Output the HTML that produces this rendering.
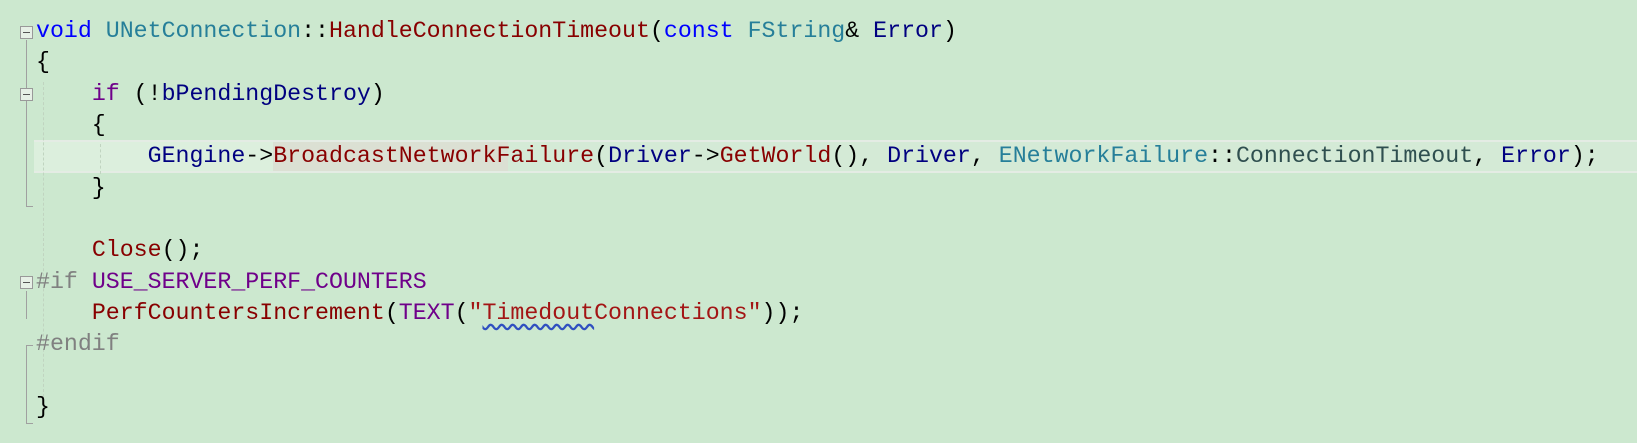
<!DOCTYPE html>
<html><head><meta charset="utf-8"><style>
body{margin:0;width:1637px;height:443px;background:#cce8cf;overflow:hidden;position:relative;font-family:"Liberation Mono",monospace;}
.l{position:absolute;left:36px;height:31px;line-height:31px;font-size:23.25px;white-space:pre;color:#000;}
.k{color:#0000ff}.c{color:#267f99}.f{color:#880000}.v{color:#000080}.m{color:#6f008a}.p{color:#808080}.e{color:#2f4f4f}.s{color:#a31515}
.fold{position:absolute;left:20px;width:11px;height:11px;border:1px solid #999;background:#e6f0e6;}
.fold:after{content:"";position:absolute;left:2px;top:5px;width:7px;height:1px;background:#555;}
.vl{position:absolute;left:26px;width:1px;background:#a0a0a0;}
.dg{position:absolute;width:0;border-left:1px dashed #c0d4c0;}
</style></head><body>
<div style="position:absolute;left:34px;top:140px;width:1603px;height:29px;border-top:2px solid #e4ece4;border-bottom:2px solid #e4ece4;background:#d4ead6"></div>
<div style="position:absolute;left:34px;top:142px;width:239px;height:29px;background:#dcefdd"></div>
<div style="position:absolute;left:273px;top:142px;width:235px;height:29px;background:#dbe0d3"></div>
<div class="vl" style="top:40px;height:166px"></div>
<div class="vl" style="top:206px;height:1px;width:7px"></div>
<div class="vl" style="top:291px;height:28px"></div>
<div class="vl" style="top:345px;height:78px"></div>
<div class="vl" style="top:345px;height:1px;width:7px"></div>
<div class="vl" style="top:423px;height:1px;width:7px"></div>
<div class="dg" style="left:43px;top:82px;height:315px"></div>
<div class="dg" style="left:100px;top:144px;height:30px"></div>
<div class="fold" style="top:26px"></div>
<div class="fold" style="top:88px"></div>
<div class="fold" style="top:276px"></div>
<div class="l" style="top:16px"><span class="k">void</span> <span class="c">UNetConnection</span>::<span class="f">HandleConnectionTimeout</span>(<span class="k">const</span> <span class="c">FString</span>&amp; <span class="v">Error</span>)</div>
<div class="l" style="top:47px">{</div>
<div class="l" style="top:79px">    <span class="m">if</span> (!<span class="v">bPendingDestroy</span>)</div>
<div class="l" style="top:110px">    {</div>
<div class="l" style="top:141px">        <span class="v">GEngine</span>-&gt;<span class="f">BroadcastNetworkFailure</span>(<span class="v">Driver</span>-&gt;<span class="f">GetWorld</span>(), <span class="v">Driver</span>, <span class="c">ENetworkFailure</span>::<span class="e">ConnectionTimeout</span>, <span class="v">Error</span>);</div>
<div class="l" style="top:173px">    }</div>
<div class="l" style="top:235px">    <span class="f">Close</span>();</div>
<div class="l" style="top:267px"><span class="p">#if</span> <span class="m">USE_SERVER_PERF_COUNTERS</span></div>
<div class="l" style="top:298px">    <span class="f">PerfCountersIncrement</span>(<span class="m">TEXT</span>(<span class="s">"<span style="text-decoration:underline wavy #3050c0;text-underline-offset:4px">Timedout</span>Connections"</span>));</div>
<div class="l" style="top:329px"><span class="p">#endif</span></div>
<div class="l" style="top:392px">}</div>
</body></html>
